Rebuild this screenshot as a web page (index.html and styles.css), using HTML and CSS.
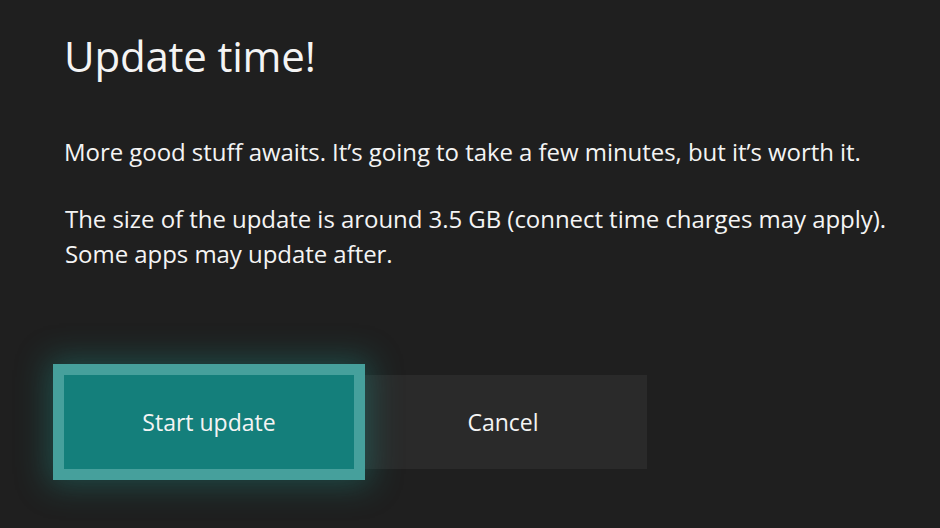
FILE: index.html
```html
<!DOCTYPE html>
<html>
<head>
<meta charset="utf-8">
<link rel="stylesheet" href="styles.css">
</head>
<body>
<main class="dialog">
  <h1 class="title">Update time!</h1>
  <p class="text first">More good stuff awaits. It’s going to take a few minutes, but it’s worth it.</p>
  <p class="text second">The size of the update is around 3.5 GB (connect time charges may apply).<br>Some apps may update after.</p>
  <div class="actions">
    <button class="btn primary">Start update</button>
    <button class="btn secondary">Cancel</button>
  </div>
</main>
</body>
</html>
```

FILE: styles.css
```css
html, body {
  margin: 0;
  padding: 0;
  background: #1f1f1f;
  width: 940px;
  height: 528px;
  overflow: hidden;
}
.dialog {
  padding: 28px 0 0 64px;
  font-family: "Open Sans", "Noto Sans", sans-serif;
  color: #f4f4f4;
}
.title {
  margin: 0;
  font-weight: 400;
  font-size: 42px;
  line-height: 56px;
  letter-spacing: -0.2px;
}
.text {
  margin: 0;
  font-size: 24px;
  line-height: 35px;
  letter-spacing: -0.05px;
}
.first {
  margin-top: 50px;
}
.second {
  margin-top: 32px;
  padding-left: 1px;
}
.actions {
  display: flex;
  margin-top: 104px;
}
.btn {
  border: none;
  margin: 0;
  height: 94px;
  font-family: inherit;
  font-size: 23px;
  color: #f4f4f4;
  padding: 0;
}
.primary {
  width: 290px;
  background: #147f7b;
  box-shadow: 0 0 0 11px #46a09c, 0 0 30px 16px rgba(30, 150, 140, 0.38);
  position: relative;
  z-index: 1;
}
.secondary {
  width: 282px;
  background: #2a2a2a;
  margin-left: 11px;
  padding-right: 6px;
}
```
